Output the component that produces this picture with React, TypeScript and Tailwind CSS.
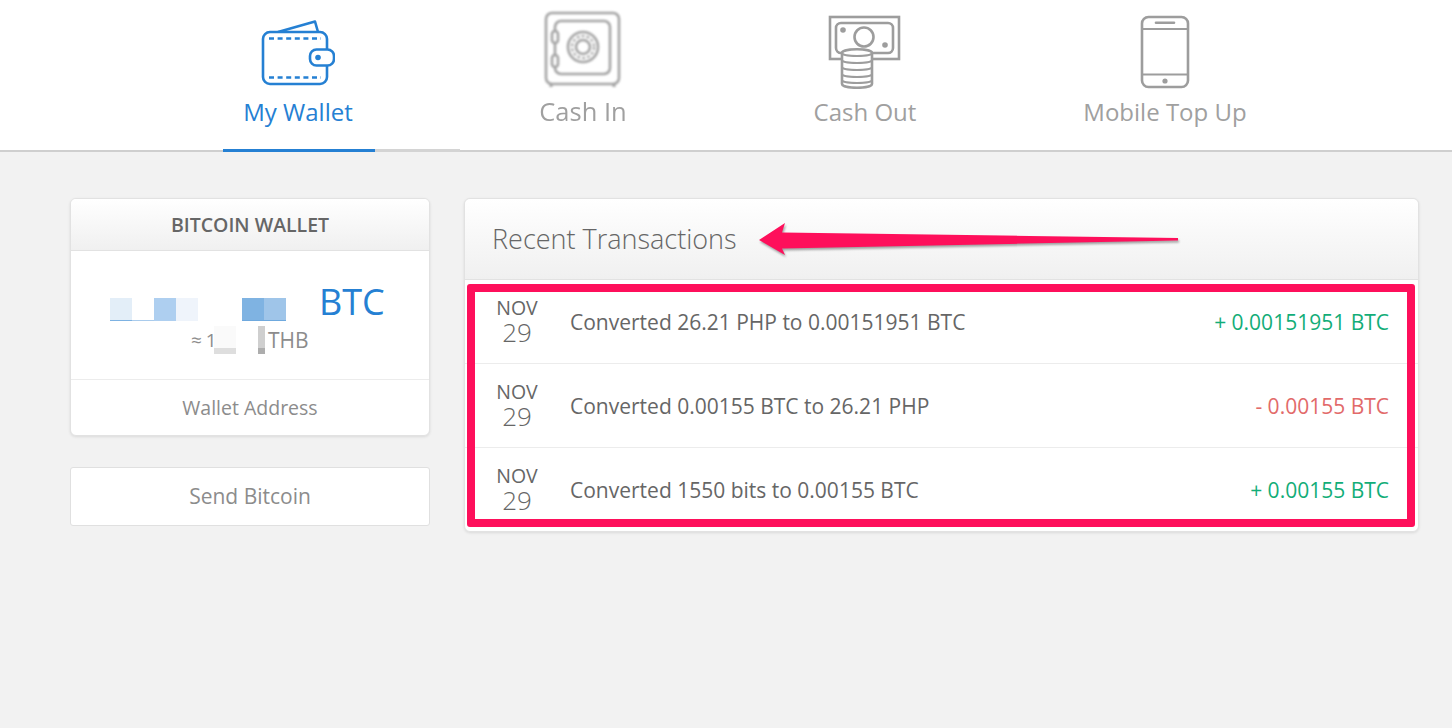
const BLUE = "#2580d3";

function WalletIcon() {
  return (
    <svg viewBox="0 0 74 66" className="h-[66px] w-[74px]" fill="none" stroke={BLUE} strokeWidth="2.6">
      <path d="M17 12 L54 1.5 L57 12" strokeLinejoin="round" />
      <rect x="2" y="12" width="64" height="52" rx="7" fill="#fff" />
      <path d="M8 18.5H60M8 57.5H60" strokeDasharray="5 3.6" strokeWidth="2.4" />
      <rect x="49" y="29.5" width="24" height="16" rx="6.5" fill="#fff" />
      <circle cx="57" cy="37.5" r="2.8" fill={BLUE} stroke="none" />
    </svg>
  );
}

function SafeIcon() {
  return (
    <svg viewBox="0 0 78 78" className="h-[78px] w-[78px] blur-[0.8px]" fill="none" stroke="#a4a4a4" strokeWidth="2.6">
      <rect x="2" y="2" width="73" height="71" rx="6" />
      <rect x="11" y="10" width="55" height="53" rx="6" />
      <path d="M7 73v3M70 73v3" strokeWidth="3" />
      <rect x="8" y="20" width="6" height="12" rx="3" fill="#fff" />
      <rect x="8" y="44" width="6" height="12" rx="3" fill="#fff" />
      <circle cx="39" cy="36" r="15" />
      <circle cx="39" cy="36" r="7" />
      <circle cx="39" cy="36" r="11" strokeDasharray="3 2" strokeWidth="2" />
    </svg>
  );
}

function CashIcon() {
  return (
    <svg viewBox="0 0 74 74" className="h-[74px] w-[74px]" fill="none" stroke="#9d9d9d" strokeWidth="2.6">
      <rect x="2" y="2" width="69" height="42" />
      <rect x="8" y="8" width="57" height="30" rx="5" />
      <circle cx="36" cy="22" r="9.5" />
      <circle cx="15" cy="15" r="2.8" fill="#9d9d9d" stroke="none" />
      <circle cx="57" cy="30" r="2.8" fill="#9d9d9d" stroke="none" />
      <path d="M14 38 C14 33 44 33 44 38 V69 C44 74 14 74 14 69 Z" fill="#fff" />
      <path d="M14 38 C14 42 44 42 44 38M14 45 C14 49 44 49 44 45M14 52 C14 56 44 56 44 52M14 59 C14 63 44 63 44 59M14 65 C14 69 44 69 44 65" strokeWidth="2" />
    </svg>
  );
}

function PhoneIcon() {
  return (
    <svg viewBox="0 0 50 74" className="h-[74px] w-[50px]" fill="none" stroke="#9d9d9d" strokeWidth="2.6">
      <rect x="2" y="2" width="46" height="70" rx="6.5" />
      <path d="M2 14H48M2 59.5H48" strokeWidth="2.2" />
      <path d="M16 7.8H34" strokeLinecap="round" />
      <circle cx="25" cy="66" r="2.6" fill="#9d9d9d" stroke="none" />
    </svg>
  );
}

const rows = [
  { text: "Converted 26.21 PHP to 0.00151951 BTC", amount: "+ 0.00151951 BTC", color: "text-[#12ad78]", h: "h-[84px] border-b border-[#ececec]" },
  { text: "Converted 0.00155 BTC to 26.21 PHP", amount: "- 0.00155 BTC", color: "text-[#e26a6a]", h: "h-[84px] border-b border-[#ececec]" },
  { text: "Converted 1550 bits to 0.00155 BTC", amount: "+ 0.00155 BTC", color: "text-[#12ad78]", h: "h-[83px]" },
];

export default function App() {
  return (
    <div className="min-h-screen overflow-hidden bg-[#f2f2f2] font-['Open_Sans',sans-serif] text-[#666]">
      {/* tabs */}
      <div className="flex h-[152px] items-end border-b-2 border-[#cfcfcf] bg-white pl-[223px]">
        <div className="-mb-[2px] flex h-[152px] w-[152px] flex-col items-center border-b-[3px] border-[#2580d3] text-[#2580d3]">
          <div className="mt-[20px] -ml-[2px] h-[66px]"><WalletIcon /></div>
          <div className="mt-[10px] -ml-[2px] text-[24px] leading-[32px]">My Wallet</div>
        </div>
        <div className="-mb-[2px] h-[3px] w-[85px] bg-[#d4d4d4]" />
        <div className="flex h-[150px] w-[246px] flex-col items-center text-[#a0a0a0]">
          <div className="mt-[11px] h-[78px]"><SafeIcon /></div>
          <div className="mt-[6px] text-[25.5px] leading-[32px] blur-[0.6px]">Cash In</div>
        </div>
        <div className="h-[150px] w-[72px] flex-none" />
        <div className="flex h-[150px] w-[174px] flex-col items-center text-[#a0a0a0]">
          <div className="mt-[15px] h-[74px]"><CashIcon /></div>
          <div className="mt-[7px] text-[24px] leading-[32px]">Cash Out</div>
        </div>
        <div className="h-[150px] w-[117px] flex-none" />
        <div className="flex h-[150px] w-[192px] flex-col items-center text-[#a0a0a0]">
          <div className="mt-[15px] h-[74px]"><PhoneIcon /></div>
          <div className="mt-[7px] text-[24px] leading-[32px] whitespace-nowrap">Mobile Top Up</div>
        </div>
      </div>

      <div className="flex items-start gap-[34px] pt-[46px] pl-[70px]">
        {/* left column */}
        <div className="w-[360px]">
          <div className="overflow-hidden rounded-md border border-[#e2e2e2] bg-white shadow-[0_1px_3px_rgba(0,0,0,0.1)]">
            <div className="flex h-[52px] items-center justify-center border-b border-[#e2e2e2] bg-gradient-to-b from-white to-[#f0f0f0] text-[19.5px] font-semibold">
              BITCOIN WALLET
            </div>
            <div className="h-[129px] border-b border-[#ececec]">
              <div className="flex h-[70px] items-end pl-[39px]">
                <div className="flex items-stretch">
                  <span className="h-[23px] w-[22px] border-b border-[#7db2e2] bg-[#e3eef8]" />
                  <span className="h-[23px] w-[22px] border-b border-[#a9cbec] bg-white" />
                  <span className="h-[23px] w-[22px] bg-[#aecff0]" />
                  <span className="h-[23px] w-[22px] bg-[#eff4fb]" />
                  <span className="h-[23px] w-[44px]" />
                  <span className="h-[23px] w-[22px] border-b border-[#6fa9de] bg-[#7fb3e2]" />
                  <span className="h-[23px] w-[22px] border-b border-[#6fa9de] bg-[#9fc5e9]" />
                </div>
                <span className="-mb-[3px] ml-[33px] text-[36px] leading-[44px] text-[#2580d3]">BTC</span>
              </div>
              <div className="mt-[5px] flex h-[28px] items-center pl-[120px] text-[21px] leading-[28px] text-[#8c8c8c]">
                <span className="w-[23px] whitespace-nowrap text-[19px] tracking-tight">≈ 1</span>
                <span className="flex h-[28px] w-[22px] flex-col"><span className="h-[22px] bg-[#fafafa]" /><span className="h-[6px] bg-[#dedede]" /></span>
                <span className="w-[22px]" />
                <span className="flex h-[28px] w-[7px] flex-col"><span className="h-[22px] bg-[#cfcfcf]" /><span className="h-[6px] bg-[#adadad]" /></span>
                <span className="ml-[3px]">THB</span>
              </div>
            </div>
            <div className="flex h-[55px] items-center justify-center text-[19.5px] text-[#8c8c8c]">Wallet Address</div>
          </div>
          <div className="mt-[31px] flex h-[59px] items-center justify-center rounded-[3px] border border-[#e0e0e0] bg-white text-[21px] text-[#8c8c8c]">
            Send Bitcoin
          </div>
        </div>

        {/* transactions */}
        <div className="relative w-[955px] rounded-md border border-[#e2e2e2] bg-white shadow-[0_1px_3px_rgba(0,0,0,0.1)]">
          <div className="flex h-[81px] items-center rounded-t-md border-b border-[#e2e2e2] bg-gradient-to-b from-white to-[#f0f0f0] pl-[27px] text-[27px] font-light">
            Recent Transactions
          </div>
          {rows.map((r, i) => (
            <div key={i} className={`flex items-start pr-[29px] pl-[16px] ${r.h}`}>
              <div className="mt-[16px] mr-[17px] w-[72px] flex-none text-center">
                <div className="text-[19.5px] leading-[24px]">NOV</div>
                <div className="text-[26px] leading-[24px] font-light">29</div>
              </div>
              <div className="mt-[27px] text-[21px] leading-[30px]">{r.text}</div>
              <div className={`mt-[27px] ml-auto text-[21px] leading-[30px] ${r.color}`}>{r.amount}</div>
            </div>
          ))}

          {/* annotation box */}
          <div className="absolute top-[85px] left-[2px] h-[243px] w-[948px] rounded-[3px] border-[8px] border-[#fe0f5b]" />
          {/* annotation arrow */}
          <svg viewBox="0 0 430 40" className="absolute top-[21px] left-[291px] h-[40px] w-[430px] drop-shadow-[1px_2px_1px_rgba(0,0,0,0.35)]">
            <path d="M3 20 L29 3 L26 12.5 L422 18 L422 20.5 L26 28.5 L29 35 Z" fill="#fe0f5b" />
          </svg>
        </div>
      </div>
    </div>
  );
}
